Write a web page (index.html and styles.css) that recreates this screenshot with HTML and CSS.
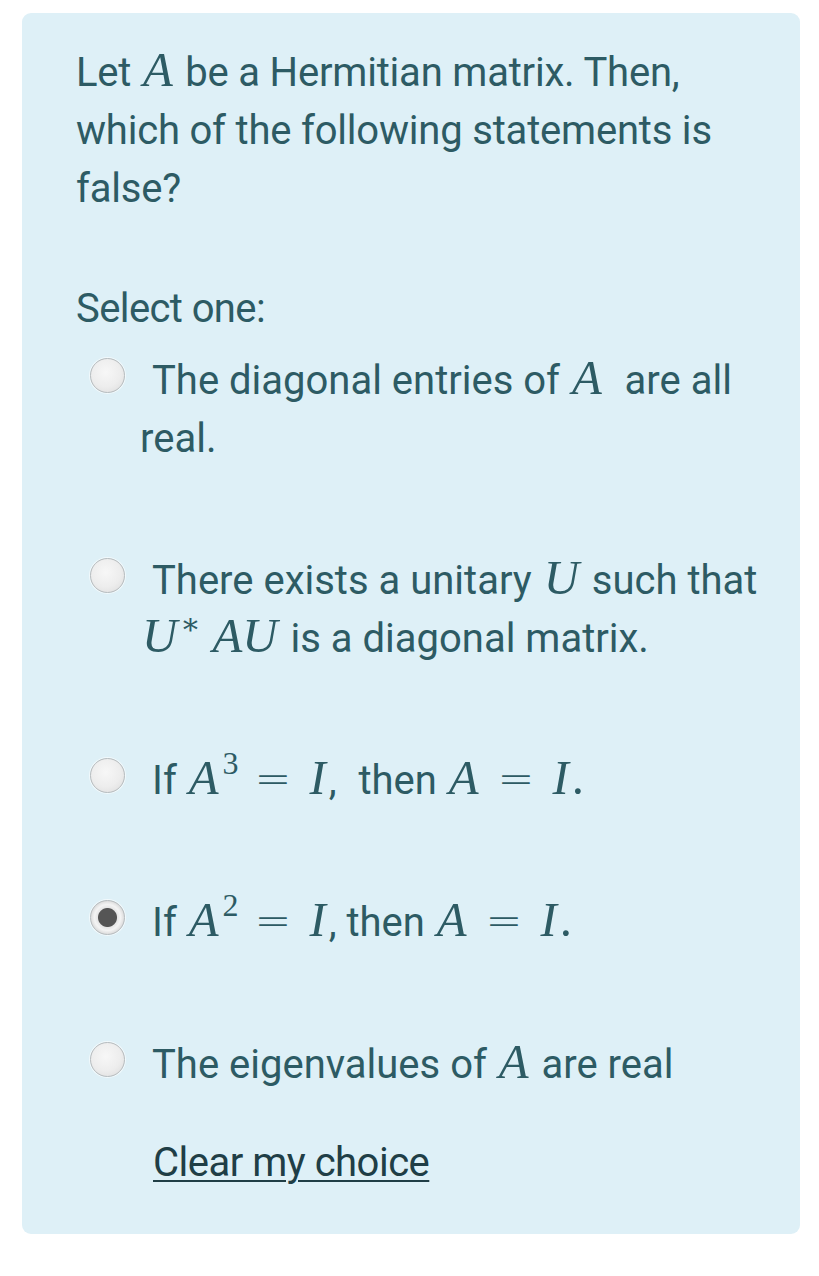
FILE: index.html
```html
<!DOCTYPE html>
<html lang="en">
<head>
<meta charset="utf-8">
<title>Question</title>
<link rel="stylesheet" href="styles.css">
</head>
<body>
<div class="card">
  <div class="qtext">Let <span class="mi">A</span> be a Hermitian matrix. Then, which of the following statements is false?</div>
  <div class="prompt">Select one:</div>
  <div class="answers">
    <div class="answer"><span class="radio"></span>The diagonal entries of <span class="mi">A</span>&nbsp; are all real.</div>
    <div class="answer"><span class="radio"></span>There exists a unitary <span class="mi">U</span> such that <span class="mi">U</span><span class="sup star">∗</span> <span class="mi">AU</span> is a diagonal matrix.</div>
    <div class="answer"><span class="radio"></span>If <span class="mi">A</span><span class="sup">3</span><span class="mo">=</span><span class="mi">I</span>,<span class="wide"> then</span> <span class="mi">A</span><span class="mo">=</span><span class="mi">I</span><span class="mn">.</span></div>
    <div class="answer"><span class="radio checked"></span>If <span class="mi">A</span><span class="sup">2</span><span class="mo">=</span><span class="mi">I</span>, then <span class="mi">A</span><span class="mo">=</span><span class="mi">I</span><span class="mn">.</span></div>
    <div class="answer"><span class="radio"></span>The eigenvalues of <span class="mi">A</span> are real</div>
  </div>
  <a class="clear" href="#">Clear my choice</a>
</div>
</body>
</html>
```
FILE: styles.css
```css
html, body {
  margin: 0;
  padding: 0;
  background: #ffffff;
}
body {
  font-family: Roboto, "Noto Sans", sans-serif;
  color: #2d5b64;
}
.card {
  margin: 13px 19px 0 22px;
  height: 1221px;
  box-sizing: border-box;
  background: #def0f7;
  border-radius: 9px;
  padding: 31px 40px 0 54px;
  font-size: 40px;
  line-height: 58px;
}
.qtext {
  letter-spacing: -0.2px;
}
.prompt {
  margin-top: 62px;
  letter-spacing: -0.6px;
}
.answers {
  margin-top: 14px;
  display: flex;
  flex-direction: column;
  gap: 84px;
}
.answer {
  padding-left: 64px;
}
.radio {
  display: inline-block;
  box-sizing: border-box;
  width: 35px;
  height: 35px;
  margin-left: -50px;
  margin-right: 27px;
  vertical-align: 1px;
  border-radius: 50%;
  border: 1.5px solid #b8bcbe;
  background: radial-gradient(circle at 45% 40%, #f7f7f7 0%, #ededed 55%, #dadada 100%);
  box-shadow: 0 0 0 1px rgba(255,255,255,0.6);
}
.radio.checked {
  background: radial-gradient(circle closest-side at 50% 50%, #555555 0, #555555 9px, #e6e6e6 10px, #f4f4f4 13px, #dadada 17px);
}
.mi, .mn, .mo, .sup {
  line-height: 0;
}
.mi {
  font-family: "Liberation Serif", "DejaVu Serif", serif;
  font-style: italic;
  font-size: 1.22em;
  margin: 0 3px 0 2px;
}
.mn {
  font-family: "Liberation Serif", "DejaVu Serif", serif;
  font-size: 1.22em;
}
.sup {
  font-family: "Liberation Serif", "DejaVu Serif", serif;
  font-size: 0.8em;
  vertical-align: 0.62em;
  margin-left: 1px;
}
.sup.star {
  font-size: 0.75em;
  vertical-align: 0.6em;
  margin-left: 0;
}
.mo {
  display: inline-block;
  font-family: "DejaVu Sans", sans-serif;
  font-weight: 200;
  font-size: 1.1em;
  margin: 0 16px 0 16px;
}
.wide {
  margin-left: 12px;
}
.clear {
  display: inline-block;
  margin-top: 40px;
  margin-left: 77px;
  color: #203e46;
  letter-spacing: -0.5px;
  text-decoration: underline;
  text-decoration-thickness: 2px;
  text-underline-offset: 4px;
}
```
